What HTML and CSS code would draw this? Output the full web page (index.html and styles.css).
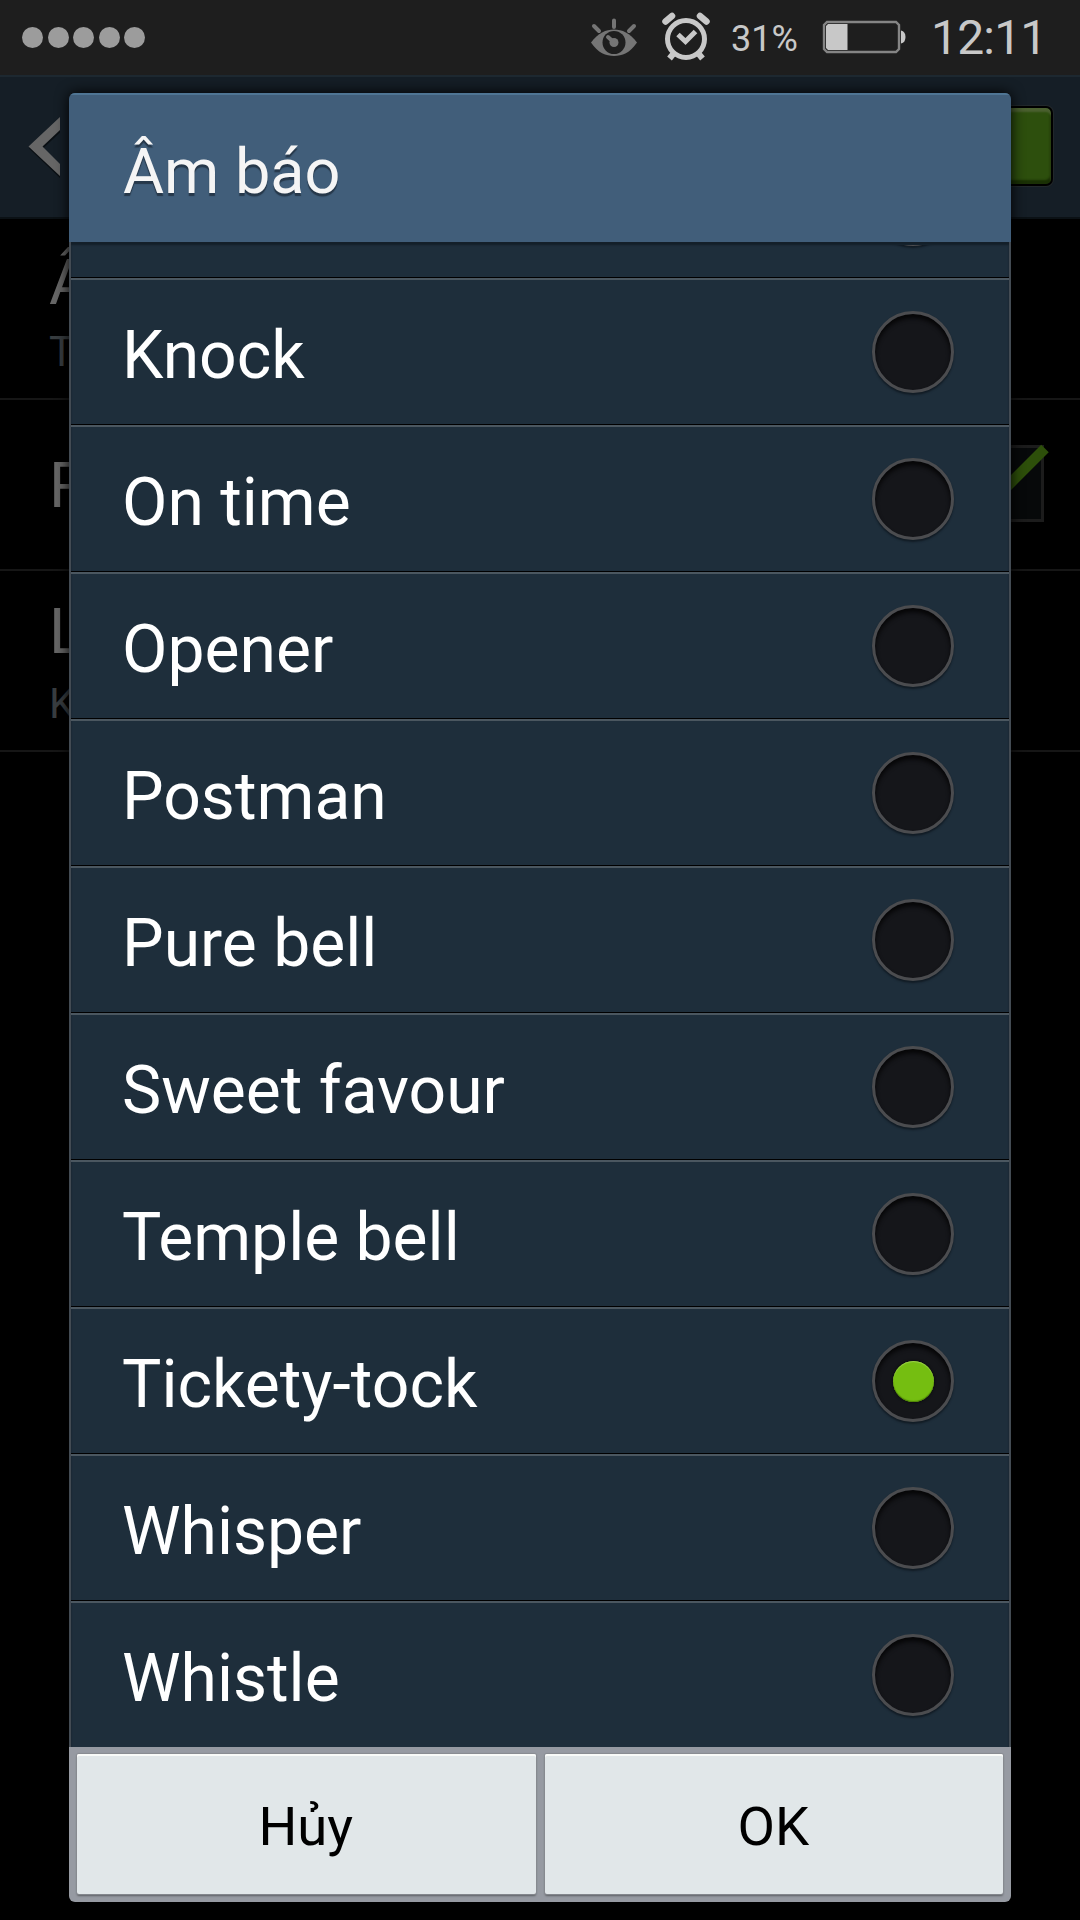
FILE: index.html
```html
<!DOCTYPE html>
<html lang="vi">
<head>
  <meta charset="UTF-8" />
  <meta name="viewport" content="width=device-width, initial-scale=1" />
  <title>Âm báo</title>
  <link rel="stylesheet" href="styles.css">
</head>
<body>
  <div class="screen">
    <!-- Status bar -->
    <div class="status-bar">
      <div class="signal"><i></i><i></i><i></i><i></i><i></i></div>
      <svg class="eye" width="48" height="40" viewBox="0 0 48 40">
        <path d="M1 24.500C8 15 16 11.500 24 11.500S40 15 47 24.500C40 35 32 38 24 38S8 35 1 24.500Z" fill="#757575"/>
        <circle cx="24" cy="24.500" r="11.500" fill="#1e1e1e"/>
        <circle cx="24" cy="24.500" r="4.500" fill="#757575"/>
        <path d="M24 24.500L18 19M24 2.500V9M4 8L9 13M44 8L39 13" stroke="#757575" stroke-width="4" stroke-linecap="round" fill="none"/>
      </svg>
      <svg class="alarm" width="48" height="50" viewBox="0 0 48 50">
        <g stroke="#c8c8c8" fill="none">
          <circle cx="24" cy="27" r="18.500" stroke-width="5"/>
          <path d="M16 22.500L23.500 29.500L33.500 19.500" stroke-width="5"/>
          <path d="M3.500 9.500L10 4M44.500 9.500L38 4" stroke-width="6.500" stroke-linecap="round"/>
          <path d="M12 41L7.500 46.500M36 41L40.500 46.500" stroke-width="6"/>
        </g>
      </svg>
      <span class="percent">31%</span>
      <svg class="battery" width="84" height="34" viewBox="0 0 84 34">
        <path d="M5 2H74L77 5V29L74 32H5L2 29V5Z" fill="none" stroke="#858585" stroke-width="2.400"/>
        <path d="M6 4H25.500V30H6L4 28V6Z" fill="#c8c8c8"/>
        <path d="M79 10.500Q83.500 11.500 83.500 17T79 23.500Z" fill="#c8c8c8"/>
      </svg>
      <span class="clock">12:11</span>
    </div>

    <!-- Settings page behind the dialog -->
    <div class="action-bar">
      <svg class="back" width="36" height="62" viewBox="0 0 36 62">
        <path d="M32 2V15.500L15 31.500L32 49V61L1 31.500Z" fill="#0a0f13"/>
        <path d="M32 0V13L14.500 29.500L32 47V59L0.500 29.500Z" fill="#666"/>
      </svg>
      <div class="switch"></div>
    </div>
    <div class="settings">
      <div class="setting">
        <div class="name">Â</div>
        <div class="summary">T</div>
      </div>
      <div class="setting single">
        <div class="name">R</div>
        <svg class="check" width="84" height="84" viewBox="0 0 84 84">
          <rect x="3.500" y="7.500" width="74" height="74" fill="#07090a" stroke="#1c1c1c" stroke-width="3"/>
          <path d="M16 25.500L40 49.500L80 9.500" stroke="#2d4f0a" stroke-width="10.600" fill="none"/>
        </svg>
      </div>
      <div class="setting last">
        <div class="name">L</div>
        <div class="summary">K</div>
      </div>
    </div>

    <!-- Ringtone picker -->
    <div class="dialog">
      <div class="dialog-title"><span>Âm báo</span></div>
      <div class="list">
        <div class="row cut"><span></span><i class="radio"></i></div>
        <div class="row"><span>Knock</span><i class="radio"></i></div>
        <div class="row"><span>On time</span><i class="radio"></i></div>
        <div class="row"><span>Opener</span><i class="radio"></i></div>
        <div class="row"><span>Postman</span><i class="radio"></i></div>
        <div class="row"><span>Pure bell</span><i class="radio"></i></div>
        <div class="row"><span>Sweet favour</span><i class="radio"></i></div>
        <div class="row"><span>Temple bell</span><i class="radio"></i></div>
        <div class="row"><span>Tickety-tock</span><i class="radio on"></i></div>
        <div class="row"><span>Whisper</span><i class="radio"></i></div>
        <div class="row"><span>Whistle</span><i class="radio"></i></div>
      </div>
      <div class="buttons">
        <button>Hủy</button>
        <button>OK</button>
      </div>
    </div>
  </div>
</body>
</html>
```
FILE: styles.css
```css
* {
  margin: 0;
  padding: 0;
  box-sizing: border-box;
}
body {
  background: #000;
  font-family: Roboto, sans-serif;
}
.screen {
  position: relative;
  width: 1080px;
  height: 1920px;
  overflow: hidden;
}
.status-bar {
  display: flex;
  align-items: flex-start;
  height: 75px;
  background: #1e1e1e;
  color: #c8c8c8;
}
.signal {
  display: flex;
  gap: 4.5px;
  margin: 27px auto 0 22px;
}
.signal i {
  width: 21px;
  height: 21px;
  border-radius: 50%;
  background: #9c9c9c;
}
.eye {
  margin: 18px 24px 0 0;
}
.alarm {
  margin: 12px 21px 0 0;
}
.percent {
  width: 66px;
  margin: 18px 25px 0 0;
  font-size: 36px;
  line-height: 42px;
  white-space: nowrap;
}
.battery {
  margin: 20px 25px 0 0;
}
.clock {
  width: 149px;
  margin-top: 10px;
  font-size: 48px;
  line-height: 56px;
  letter-spacing: -0.8px;
  white-space: nowrap;
}
.action-bar {
  display: flex;
  justify-content: space-between;
  height: 144px;
  padding: 32px 27px 0 28px;
  background: #151e26;
  border-top: 2px solid #1d2830;
  border-bottom: 2px solid #0b1115;
}
.back {
  margin-top: 8px;
}
.switch {
  width: 180px;
  height: 80px;
  margin-top: -3px;
  background: #2d4f0d;
  border: 2px solid #000;
  border-radius: 7px;
  box-shadow: inset 0 4px 2px #4b6030, inset -1px -4px 2px #1a3005, 0 0 0 1px #22282b;
}
.setting {
  height: 181px;
  padding: 22px 0 0 49px;
  border-bottom: 2px solid #161616;
}
.setting.single {
  display: flex;
  justify-content: space-between;
  height: 171px;
  padding: 44px 31px 0 49px;
}
.setting .name {
  width: 20px;
  overflow: hidden;
  font-size: 63px;
  line-height: 84px;
  color: #666;
}
.setting .summary {
  width: 20px;
  margin-top: 2px;
  overflow: hidden;
  font-size: 42px;
  line-height: 50px;
  color: #383d40;
}
.setting.last {
  padding-top: 19px;
}
.setting.last .summary {
  margin-top: 5px;
}
.check {
  margin-top: -5px;
}
.dialog {
  position: absolute;
  left: 69px;
  top: 93px;
  width: 942px;
  height: 1809px;
  border-radius: 6px;
  overflow: hidden;
  box-shadow: 0 0 14px #000;
}
.dialog-title {
  height: 149px;
  padding: 42px 0 0 54px;
  background: #415e7a;
  border-top: 2px solid #4f7594;
  color: #f5f5f5;
  font-size: 63px;
  line-height: 70px;
  text-shadow: 0 3px 1px #26384a;
}
.list {
  height: 1505px;
  padding-top: 3px;
  background: #1e2e3b;
  border: 2px solid #434b53;
  border-width: 0 2px;
  box-shadow: inset 0 3px 2px #141f29;
}
.row {
  display: flex;
  align-items: center;
  justify-content: space-between;
  height: 147px;
  padding: 0 55px 1px 51px;
  border-bottom: 2px solid #4b5760;
  box-shadow: inset 0 -1px #000;
}
.row:last-child {
  height: 144px;
  padding-bottom: 0;
  border: 0;
  box-shadow: none;
}
.row span {
  padding-top: 7px;
  color: #fff;
  font-size: 66px;
  line-height: 78px;
}
/* only the lower edge of this row shows below the title */
.row.cut {
  height: 35px;
  align-items: flex-end;
  overflow: hidden;
}
.row.cut .radio {
  margin-bottom: 31px;
}
.radio {
  display: flex;
  flex: none;
  align-items: center;
  justify-content: center;
  width: 82px;
  height: 82px;
  border: 3px solid #4b4c4f;
  border-radius: 50%;
  background: #15161a;
  box-shadow: inset 0 4px 4px #060607, 0 2px 2px #111b24;
}
.radio.on::after {
  content: "";
  width: 41px;
  height: 41px;
  border-radius: 50%;
  background: #75be11;
  box-shadow: inset 0 1px 1px #9bd04a, inset 0 -1px 1px #4d8206, 0 0 3px #060607;
}
.buttons {
  display: grid;
  grid-template-columns: 1fr 1fr;
  gap: 9px;
  height: 155px;
  padding: 7px 8px 8px;
  background: #969aa2;
}
.buttons button {
  height: 140px;
  padding: 4px 1px 0 0;
  border: 0;
  border-radius: 2px;
  background: #e1e7e9;
  box-shadow: inset 0 2px #f8faf8, 0 0 1px 1px #888b91, 0 2px 2px #5b5e63;
  color: #000;
  font-family: inherit;
  font-size: 54.5px;
}
```
